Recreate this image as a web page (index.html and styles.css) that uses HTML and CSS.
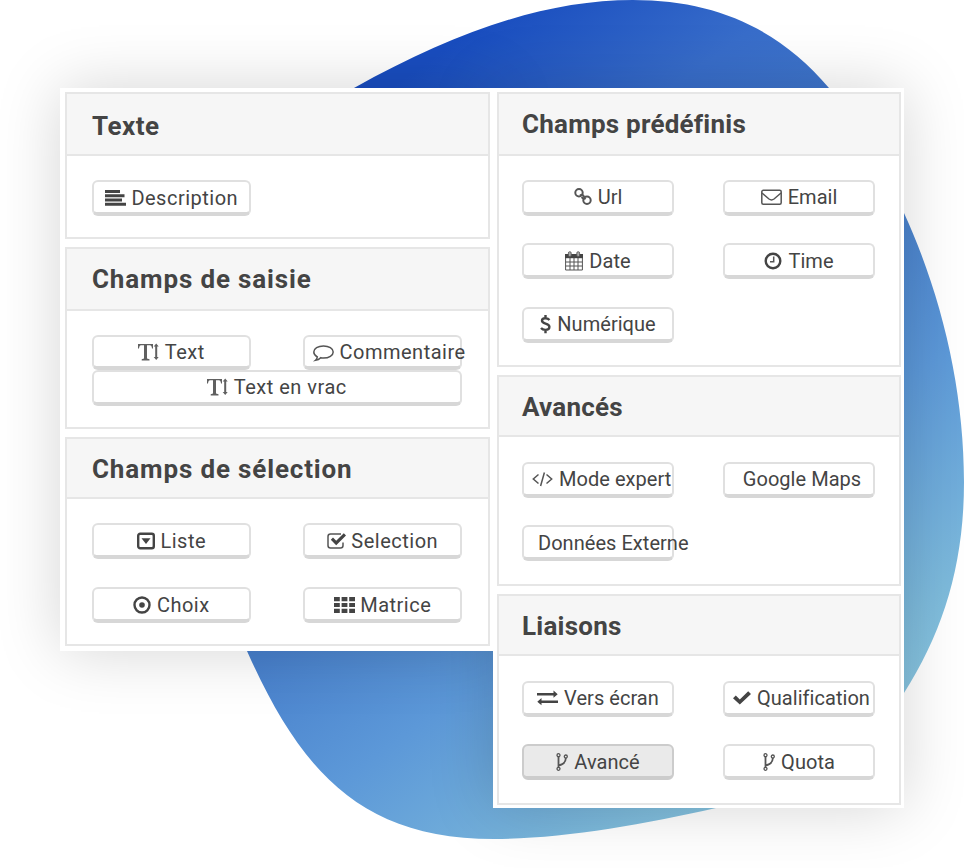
FILE: index.html
```html
<!DOCTYPE html>
<html lang="fr">
<head>
<meta charset="utf-8">
<title>Champs</title>
<link rel="stylesheet" href="styles.css">
</head>
<body>
<svg class="blob" viewBox="0 0 964 868" aria-hidden="true">
  <defs><linearGradient id="sky" gradientUnits="userSpaceOnUse" x1="430" y1="60" x2="900" y2="720">
    <stop offset="0" stop-color="#194dbf"/><stop offset=".2" stop-color="#386dca"/><stop offset=".48" stop-color="#4880cc"/><stop offset=".66" stop-color="#5c98d8"/><stop offset=".9" stop-color="#7dbadb"/><stop offset="1" stop-color="#8ac7e1"/>
  </linearGradient></defs>
  <path fill="url(#sky)" d="M354 88C455 32 545 0 633 0C717 0 780 30 829 88C855 122 884 169 904 213C942 296 964 390 964 482C964 565 943 632 904 693C855 766 785 795 716 808C641 825 560 839 494 839C360 839 300 770 247 651C180 480 190 200 354 88Z"/>
</svg>
<main class="board">
  <div class="panel panel-left">
    <section class="card texte">
      <h2>Texte</h2>
      <div class="fields">
        <div class="btn"><svg class="w21" viewBox="0 0 21 20"><path d="M0 2h15v3H0zM0 6.200h19.500v3H0zM0 10.500h17v3H0zM0 14.800h21v3H0z"/></svg><span>Description</span></div>
      </div>
    </section>
    <section class="card saisie">
      <h2>Champs de saisie</h2>
      <div class="fields">
        <div class="btn"><svg class="w21" viewBox="0 0 21 20"><g class="soft"><path d="M0 2h15v4.500h-1Q13.600 3.300 12 3.300H9V16.500l2.500.7v1.300H3.700v-1.300l2.300-.7V3.300H3Q1.400 3.300 1 6.500H0z"/><path d="M18.200 1.500l2.500 3h-1.500v10.500h1.500l-2.500 3-2.500-3h1.500V4.500h-1.500z"/></g></svg><span>Text</span></div>
        <div class="btn"><svg class="w21" viewBox="0 0 21 20"><path class="line" d="M10.500 4C5 4 .8 6.500.8 10c0 2 1.300 3.700 3.500 4.800-.2 1.500-.8 2.700-1.800 3.500 2.300-.3 4-1.300 5.200-2.600.9.200 1.800.3 2.800.3 5.400 0 9.700-2.600 9.700-6S15.900 4 10.500 4z"/></svg><span>Commentaire</span></div>
        <div class="btn wide"><svg class="w21" viewBox="0 0 21 20"><g class="soft"><path d="M0 2h15v4.500h-1Q13.600 3.300 12 3.300H9V16.500l2.500.7v1.300H3.700v-1.300l2.300-.7V3.300H3Q1.400 3.300 1 6.500H0z"/><path d="M18.200 1.500l2.500 3h-1.500v10.500h1.500l-2.500 3-2.500-3h1.500V4.500h-1.500z"/></g></svg><span>Text en vrac</span></div>
      </div>
    </section>
    <section class="card selection">
      <h2>Champs de sélection</h2>
      <div class="fields">
        <div class="btn"><svg class="w18" viewBox="0 0 18 20"><rect class="line bold" x="1.200" y="2.700" width="15.600" height="14.600" rx="2"/><path d="M4.500 7.300h9L9 13z"/></svg><span>Liste</span></div>
        <div class="btn"><svg class="w19" viewBox="0 0 19 20"><path class="line" d="M14 2.900H3.500Q1 2.900 1 5.400v9.200q0 2.500 2.500 2.500h10q2.500 0 2.500-2.500v-3"/><path d="M3.800 8.700l2.200-2.200 3.200 3.200L16.800 2.300 19 4.500 9.200 14.300z"/></svg><span>Selection</span></div>
        <div class="btn"><svg class="w18" viewBox="0 0 18 20"><circle class="line bold" cx="9" cy="10" r="7.500"/><circle cx="9" cy="10" r="2.800"/></svg><span>Choix</span></div>
        <div class="btn"><svg class="w21" viewBox="0 0 21 20"><path d="M0 2h5.800v4.200H0zM7.600 2h5.800v4.200H7.600zM15.200 2H21v4.200h-5.800zM0 7.900h5.800v4.200H0zM7.600 7.900h5.800v4.200H7.600zM15.200 7.900H21v4.200h-5.800zM0 13.800h5.800V18H0zM7.600 13.800h5.800V18H7.600zM15.200 13.800H21V18h-5.800z"/></svg><span>Matrice</span></div>
      </div>
    </section>
  </div>
  <div class="panel panel-right">
    <section class="card predef">
      <h2>Champs prédéfinis</h2>
      <div class="fields">
        <div class="btn"><svg class="w18" viewBox="0 0 18 20"><circle class="line mid" cx="5" cy="5.800" r="3.700"/><circle class="line mid" cx="13" cy="13.200" r="3.700"/><path class="line mid" d="M6 8.500Q9 6.500 10.200 10M7.600 10q2.300 2.800 4 1"/></svg><span>Url</span></div>
        <div class="btn"><svg class="w21" viewBox="0 0 21 20"><rect class="line" x=".8" y="3.300" width="19.400" height="14" rx="1.500"/><path class="line" d="M1 6l7 6q2.500 1.800 5 0l7-6"/></svg><span>Email</span></div>
        <div class="btn"><svg class="w18" viewBox="0 0 18 20"><path class="line thin" d="M.6 5v14h16.800V5M.6 11h16.800M.6 15h16.800M5 7v12M9 7v12M13 7v12"/><path d="M0 3h18v4.200H0z"/><rect class="pin" x="3.400" y=".7" width="2.800" height="4.800" rx="1.300"/><rect class="pin" x="11.800" y=".7" width="2.800" height="4.800" rx="1.300"/></svg><span>Date</span></div>
        <div class="btn"><svg class="w18" viewBox="0 0 18 20"><circle class="line bold" cx="9" cy="10" r="7.300"/><path class="line" d="M9.700 5.500v5.200H6"/></svg><span>Time</span></div>
        <div class="btn"><svg class="w11" viewBox="0 0 11 20"><path class="line bold" d="M9.500 6Q7.800 4.300 5.300 4.300 2 4.300 2 6.800C2 10.400 9.400 8.800 9.400 12.800 9.400 15 7.600 15.900 5.300 15.900Q2.600 15.900 1 14M5.500 1v3.300M5.500 15.900v3.300"/></svg><span>Numérique</span></div>
      </div>
    </section>
    <section class="card avances">
      <h2>Avancés</h2>
      <div class="fields">
        <div class="btn"><svg class="w21" viewBox="0 0 21 20"><path class="line" d="M6.500 5.500L1.300 10l5.200 4.500M14.500 5.500l5.200 4.500-5.200 4.500M12.400 3.500L8.600 17"/></svg><span>Mode expert</span></div>
        <div class="btn"><i></i><span>Google Maps</span></div>
        <div class="btn"><i></i><span>Données Externe</span></div>
      </div>
    </section>
    <section class="card liaisons">
      <h2>Liaisons</h2>
      <div class="fields">
        <div class="btn"><svg class="w21" viewBox="0 0 21 20"><path d="M0 5h16.500V2.500L20.700 6.300l-4.200 3.500V7.500H0zM21 12.500H4.500V10L.3 13.800l4.200 3.500V15H21z"/></svg><span>Vers écran</span></div>
        <div class="btn"><svg class="w18" viewBox="0 0 18 20"><path d="M0 10.300l2.800-2.700 4 3.800L15.200 3.300 18 6 6.800 16.500z"/></svg><span>Qualification</span></div>
        <div class="btn active"><svg class="w12" viewBox="0 0 12 20"><path class="line fork" d="M2.500 4.500v11M2.500 13.500Q9.800 12 9.800 6"/><circle class="line ring" cx="2.500" cy="3.200" r="1.500"/><circle class="line ring" cx="2.500" cy="16.800" r="1.500"/><circle class="line ring" cx="9.800" cy="4.500" r="1.500"/></svg><span>Avancé</span></div>
        <div class="btn"><svg class="w12" viewBox="0 0 12 20"><path class="line fork" d="M2.500 4.500v11M2.500 13.500Q9.800 12 9.800 6"/><circle class="line ring" cx="2.500" cy="3.200" r="1.500"/><circle class="line ring" cx="2.500" cy="16.800" r="1.500"/><circle class="line ring" cx="9.800" cy="4.500" r="1.500"/></svg><span>Quota</span></div>
      </div>
    </section>
  </div>
</main>
</body>
</html>
```
FILE: styles.css
```css
* { box-sizing: border-box; }
body { margin: 0; width: 964px; height: 868px; overflow: hidden; background: #fff; color: #444; font-family: Roboto, "Liberation Sans", sans-serif; }
.blob { position: absolute; inset: 0; width: 964px; height: 868px; }
.board { position: relative; isolation: isolate; display: flex; align-items: flex-start; padding: 88px 0 0 60px; }
.panel { position: relative; display: flex; flex-direction: column; gap: 8px; background: #fff; }
.panel::before { content: ""; position: absolute; inset: 0; z-index: -1; box-shadow: 0 0 60px rgba(0,0,0,.17); }
.panel-left { width: 434px; height: 563px; padding: 4px 4px 0 5px; }
.panel-right { width: 411px; height: 720px; margin-left: -1px; padding: 4px 3px 0 4px; }
.card { height: 147px; border: 2px solid #e6e6e6; background: #fff; flex: none; }
h2 { margin: 0; height: 61.500px; padding-left: 25px; line-height: 60px; font-size: 26px; font-weight: 700; letter-spacing: .85px; background: #f6f6f6; border-bottom: 2px solid #e6e6e6; white-space: nowrap; }
.texte h2 { line-height: 64px; letter-spacing: .5px; }
.fields { display: grid; grid-template-columns: 159px 159px; column-gap: 52px; row-gap: 28px; padding: 24.500px 0 0 25px; }
.btn { height: 36px; display: flex; align-items: center; justify-content: safe center; padding: 1px 8px 0; border: 2px solid #e0e0e0; border-bottom: 4px solid #d7d7d7; border-radius: 6px; background: #fff; font-size: 20px; letter-spacing: .5px; line-height: 30px; white-space: nowrap; }
.btn svg, .btn i { height: 20px; margin-right: 6px; flex: none; fill: #444; overflow: visible; }
.panel-left .btn svg { margin-right: 5.500px; }
.btn span { flex: none; }
.btn .line { fill: none; stroke: #555; stroke-width: 1.500; }
.btn .mid { stroke-width: 2; }
.btn .bold { stroke-width: 2.400; stroke: #444; }
.btn .thin { stroke-width: 1; }
.btn .fork { stroke-width: 1.800; }
.btn .ring { stroke-width: 1.300; }
.soft { fill: #606060; }
.pin { fill: #aaa; stroke: #555; stroke-width: .8; }
.w11 { width: 11px; } .w12 { width: 12px; } .w18 { width: 18px; } .w19 { width: 19px; } .w21 { width: 21px; }
.btn.active { background: #eaeaea; border-color: #ccc; }
.saisie { height: 182px; }
.saisie .fields { row-gap: 0; }
.saisie .btn { height: 34.500px; }
.saisie .wide { grid-column: 1 / 3; width: 370px; height: 36px; }
.selection { height: 209px; }
.selection h2 { height: 60px; }
.selection .fields { padding-top: 24px; }
.panel-right .fields { grid-template-columns: 152px 152px; column-gap: 49px; row-gap: 27.500px; padding: 24px 0 0 23px; }
.panel-right h2 { padding-left: 23px; height: 61.500px; letter-spacing: .23px; line-height: 61px; }
.panel-right .btn { letter-spacing: .04px; }
.predef { height: 274.500px; }
.avances { height: 211px; }
.liaisons { height: 211px; }
.panel-right .avances h2, .panel-right .liaisons h2 { height: 60.500px; }
.liaisons .fields, .avances .fields { padding-top: 24.500px; }
```
